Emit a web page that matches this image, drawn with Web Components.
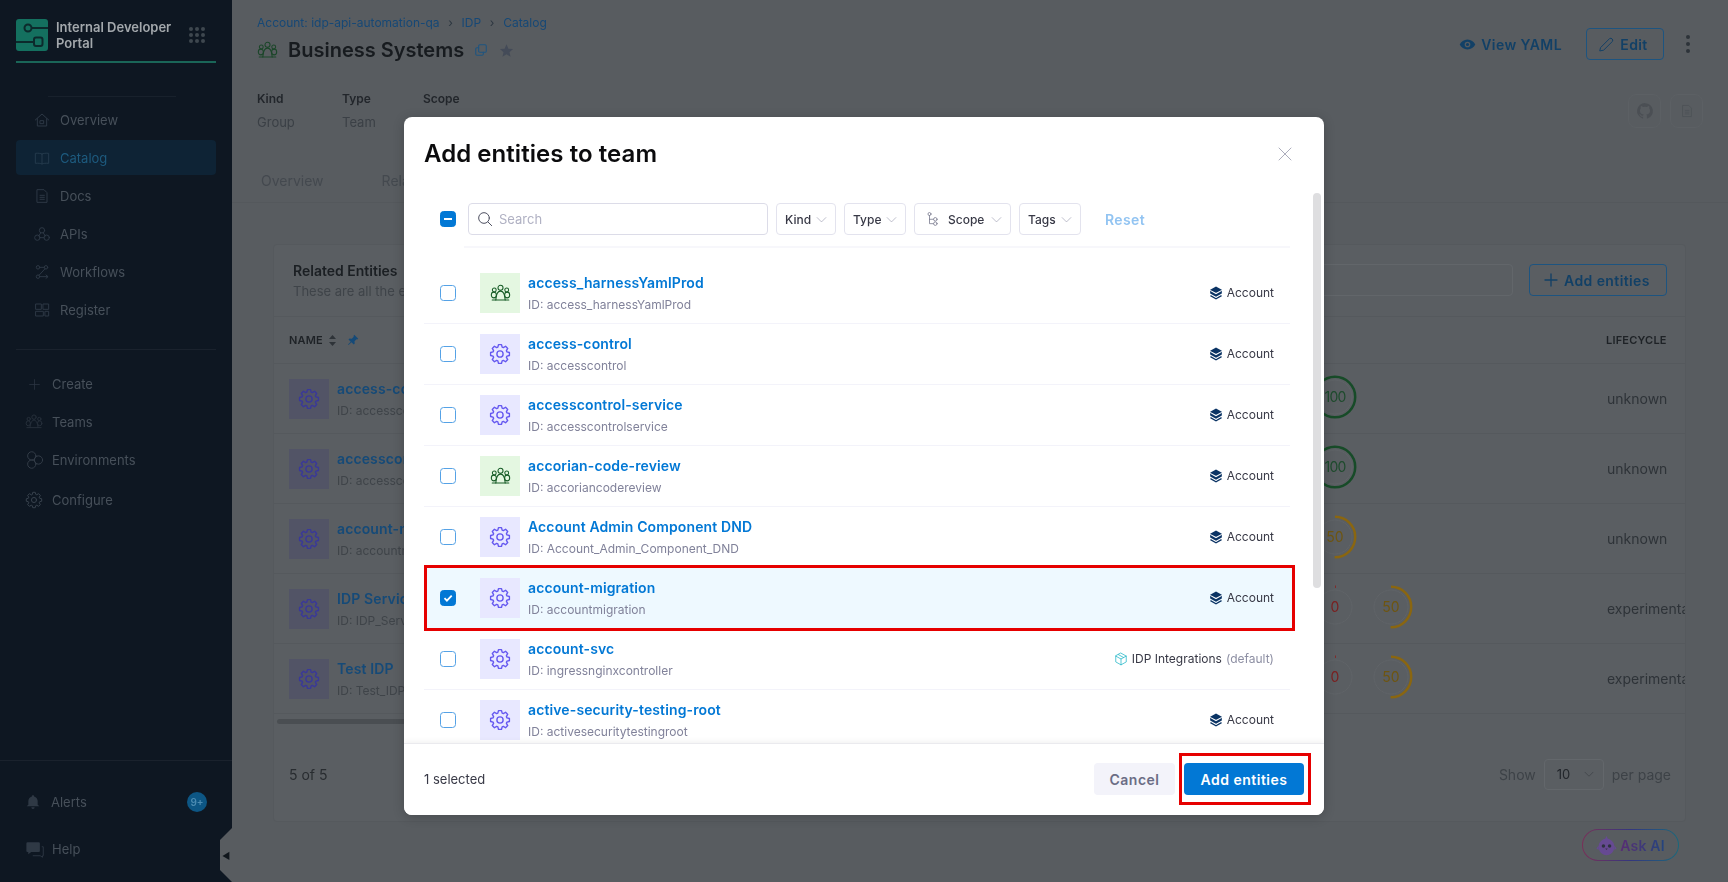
<!DOCTYPE html>
<html lang="en"><head><meta charset="utf-8"><title>Add entities to team</title>
<style>
html,body{margin:0;height:882px;overflow:hidden;background:#585c60;font-family:Inter,"Liberation Sans",sans-serif}
</style></head>
<body>
<idp-app></idp-app>
<script>
function gearPath(){
  const n=8,R=10.4,r=7.9,cx=12,cy=12;let d='';
  for(let i=0;i<n;i++){
    const a=(i/n)*Math.PI*2-Math.PI/2;
    const pts=[[r,-.3],[R,-.16],[R,.16],[r,.3]];
    pts.forEach(([q,o])=>{const x=cx+q*Math.cos(a+o),y=cy+q*Math.sin(a+o);d+=(d?'L':'M')+x.toFixed(2)+' '+y.toFixed(2)});
  }
  return d+'Z';
}
const ICONS={
 gear:`<path d="${gearPath()}"/><circle cx="12" cy="12" r="3.4"/>`,
 group:`<circle cx="12" cy="5.500" r="2.900"/><path d="M12 9.300c-3 0-5 4.700-5.400 10.200h10.800C17 14 15 9.300 12 9.300z"/><circle cx="4.900" cy="8" r="2.200"/><ellipse cx="4.400" cy="13.700" rx="2.900" ry="3.300"/><path d="M2.500 19.500h4.100"/><circle cx="19.100" cy="8" r="2.200"/><ellipse cx="19.600" cy="13.700" rx="2.900" ry="3.300"/><path d="M17.400 19.500h4.100"/>`,
 home:`<path d="M2 12 12 3l10 9"/><path d="M5 10v11h14V10"/><rect x="9.5" y="13" width="5" height="4.5"/>`,
 book:`<path d="M12 6C10 4.8 6 4.6 2 5v15c4-.4 8-.2 10 1 2-1.2 6-1.4 10-1V5c-4-.4-8-.2-10 1zM12 6v15"/>`,
 doc:`<path d="M5 2.5h10l4.5 4.5v14.5H5z"/><path d="M9 11h6.5M9 14h6.5M9 17h6.5"/>`,
 webhook:`<circle cx="12" cy="6.500" r="4"/><circle cx="5" cy="17.500" r="4"/><circle cx="19" cy="17.500" r="4"/><path d="M10 10.500 7 15M14 10.500 17 15M9 17.500h6"/>`,
 flows:`<circle cx="6" cy="5" r="2.6"/><circle cx="18" cy="5" r="2.6"/><circle cx="6" cy="19" r="2.6"/><path d="M8.6 5h6.8M16.5 7.2 7.6 16.8M8.6 19h12M18 16.5l3 2.5-3 2.5"/>`,
 grid:`<rect x="3" y="3" width="8" height="8"/><rect x="14" y="3" width="8" height="8"/><rect x="3" y="14" width="11" height="7"/><rect x="17" y="14" width="5" height="7"/>`,
 plus:`<path d="M12 3v18M3 12h18"/>`,
 hexes:`<circle cx="9" cy="6.500" r="5.500"/><circle cx="9" cy="17.500" r="5.500"/><circle cx="18" cy="12" r="5.500"/>`,
 search:`<circle cx="10.5" cy="10.5" r="8"/><path d="m16.500 16.500 5.500 5.500"/>`,
 chev:`<path d="m4 8.5 8 8 8-8"/>`,
 close:`<path d="M3 3l18 18M21 3 3 21"/>`,
 tree:`<circle cx="6" cy="3.500" r="2.600"/><path d="M6 6.100V20h6.500M6 12.500h6.500"/><circle cx="16" cy="12.500" r="3"/><circle cx="16" cy="20" r="3"/>`,
 pencil:`<path d="M4 16 16.5 3.5a3 3 0 0 1 4 4L8 20l-5 1z"/>`,
 copy:`<rect x="8" y="3" width="13" height="13" rx="2"/><path d="M8 8H5a2 2 0 0 0-2 2v9a2 2 0 0 0 2 2h9a2 2 0 0 0 2-2v-3"/>`,
 cube:`<path d="M12 2 21 7v10l-9 5-9-5V7z"/><path d="M3 7l9 5 9-5M12 12v10M7.5 4.5l9 5"/>`
};
const SOLID={
 account:`<path fill="currentColor" stroke="none" d="M12 1 22 6.5v6.4L12 18.5 2 12.900V6.500z"/><path fill="none" stroke="#fff" stroke-width="1.800" d="M2 7.500 12 13l10-5.500"/><path fill="none" stroke="currentColor" stroke-width="2" d="M2.500 16.500 12 22l9.500-5.500"/>`,
 eye:`<path fill="currentColor" d="M12 5C7 5 3 8 1 12c2 4 6 7 11 7s9-3 11-7c-2-4-6-7-11-7zm0 11a4 4 0 1 1 0-8 4 4 0 0 1 0 8z"/><circle cx="12" cy="12" r="2.200" fill="currentColor"/>`,
 star:`<path fill="currentColor" d="m12 2 3 7 7.500.7-5.700 4.900 1.700 7.400L12 18.100 5.500 22l1.700-7.400L1.500 9.700 9 9z"/>`,
 pin:`<path fill="currentColor" d="M14.500 1.500 22.500 9.500l-2 1.500-1.500-.5-4 4 .5 4.500-2 2-4.500-4.500L3 22l-1-1 5.500-5.500L3 11l2-2 4.500.5 4-4-.5-1.500z"/>`,
 bell:`<path fill="currentColor" d="M12 2a2 2 0 0 1 2 2c3 .8 5 3.500 5 6.500V16l2.500 2.500H2.500L5 16v-5.500C5 7.500 7 4.800 10 4a2 2 0 0 1 2-2zM9.500 20h5a2.500 2.500 0 0 1-5 0z"/>`,
 help:`<path fill="currentColor" d="M2 3h15a1.500 1.500 0 0 1 1.500 1.500v10A1.500 1.500 0 0 1 17 16H7l-4 3v-3H2a1.500 1.500 0 0 1-1.500-1.500v-10A1.500 1.500 0 0 1 2 3z"/><path fill="none" stroke="currentColor" stroke-width="1.200" d="M21 9h2v12h-1v2l-3-2H9"/>`,
 github:`<path fill="currentColor" d="M12 1.500A10.500 10.500 0 0 0 8.700 22c.5.100.7-.2.700-.5v-2c-3 .7-3.600-1.300-3.600-1.300-.5-1.200-1.200-1.500-1.200-1.500-1-.7.100-.7.100-.7 1.100.100 1.600 1.100 1.600 1.100 1 1.700 2.500 1.200 3.200.9.100-.7.400-1.200.7-1.500-2.400-.3-4.900-1.200-4.900-5.300 0-1.200.4-2.100 1.100-2.900-.1-.3-.5-1.300.1-2.800 0 0 .9-.3 2.900 1.100a10 10 0 0 1 5.200 0c2-1.400 2.900-1.100 2.900-1.100.6 1.500.2 2.500.1 2.800.7.800 1.100 1.700 1.100 2.900 0 4.100-2.500 5-4.900 5.300.4.300.7 1 .7 2v3c0 .3.2.6.700.5A10.500 10.500 0 0 0 12 1.500z"/>`,
 bird:`<path fill="#664a92" d="M12 1l1.500 3.200c4 .7 7.500 4.300 7.500 9.300 0 5.500-4 9.500-9 9.500s-9-4-9-9.500c0-5 3.500-8.600 7.500-9.300z"/><path fill="#664a92" d="M3 12 .5 15.500 3 17zM21 12l2.500 3.500L21 17z"/><circle cx="8.500" cy="12.500" r="2" fill="#2e3340"/><circle cx="15.500" cy="12.500" r="2" fill="#2e3340"/><path d="M10.500 15.500h3L12 17z" fill="#3a3048"/>`
};
function svg(name,size,sw,color){
  const solid=SOLID[name];
  return `<svg xmlns="http://www.w3.org/2000/svg" width="${size}" height="${size}" viewBox="0 0 24 24" style="display:block;flex:none;color:${color}" ${solid?'':`fill="none" stroke="${color}" stroke-width="${sw}" stroke-linejoin="round" stroke-linecap="round"`}>${solid||ICONS[name]}</svg>`;
}
class Base extends HTMLElement{
  connectedCallback(){ if(this.shadowRoot) return; const s=this.attachShadow({mode:'open'}); s.innerHTML=`<style>${this.css?this.css():''}</style>${this.html()}`; }
  a(n,d=''){return this.hasAttribute(n)?this.getAttribute(n):d}
}
const def=(n,c)=>customElements.define(n,c);

def('nav-item',class extends Base{
  css(){return `:host{display:flex;align-items:center;height:35px;margin:0 16px 3px;padding-left:18px;gap:10px;border-radius:4px;font-size:13px;color:#47505a}
  :host([active]){background:#0e2335;color:#1d5a7e}
  :host([tight]){padding-left:9px;height:34px;margin-bottom:4px;gap:9px}
  .w{width:18px;display:flex;justify-content:center;flex:none}
  :host(:not([tight])) .w{width:16px}`}
  html(){const act=this.hasAttribute('active');const size=+this.a('size',this.hasAttribute('tight')?18:16);return `<span class="w">${svg(this.a('icon'),size,this.hasAttribute('tight')?1.3:1.5,this.a('ic',act?'#243a4c':'#2d3845'))}</span><slot></slot>`}
});

def('idp-sidebar',class extends Base{
  css(){return `:host{display:flex;flex-direction:column;position:relative;width:232px;flex:none;height:882px;background:#0e1722;box-sizing:border-box;padding-bottom:23px}
  .brand{display:flex;align-items:center;margin:19px 16px 0;height:32px;gap:8px;color:#a3a8ac;font-size:13px;font-weight:600;line-height:16px}
  .brand span{width:123px}
  .logo{flex:none}
  .line{height:2px;background:#1a6658;margin:10px 16px 0}
  .faint{height:1px;background:#18212c;margin:33px 56px 0 48px}
  .nav{margin-top:5px}
  .nav2{margin-top:17px}
  hr{border:0;height:1px;background:#1a222d;margin:0 16px}
  hr.full{margin:0}
  .grow{flex:1}
  .alerts,.help{display:flex;align-items:center;font-size:13px;color:#47505a}
  .alerts{margin:31px 25px 0 25px;height:20px;gap:10px}
  .help{margin:27px 25px 0 26px;height:20px;gap:8px}
  .badge{margin-left:auto;width:20px;height:20px;border-radius:50%;background:#0d5684;color:#4d8cb2;font-size:10px;font-weight:600;display:flex;align-items:center;justify-content:center}
  .handle{position:absolute;right:0;top:828px;width:12px;height:54px;background:#585c60;clip-path:polygon(100% 0,100% 100%,0 78%,0 22%);display:flex;align-items:center;justify-content:center;font-size:9px;color:#10161c}
  .dots{flex:none;margin-left:2px}`}
  html(){return `<div class="brand">
    <svg class="logo" width="32" height="32" viewBox="0 0 32 32"><rect width="32" height="32" rx="3" fill="#14705f"/><g fill="none" stroke="#0c2a2c" stroke-width="2"><path d="M16 9h16M0 23h18"/><circle cx="12" cy="9" r="3.500"/><rect x="18" y="18.500" width="8.500" height="8.500" rx="2"/></g></svg>
    <span>Internal Developer Portal</span>
    <svg class="dots" width="16" height="16" viewBox="0 0 16 16" fill="#3e474f">${[2,8,14].flatMap(y=>[2,8,14].map(x=>`<circle cx="${x}" cy="${y}" r="2"/>`)).join('')}</svg>
  </div>
  <div class="line"></div><div class="faint"></div>
  <div class="nav"><slot name="primary"></slot></div>
  <hr style="margin-top:19px">
  <div class="nav2"><slot name="secondary"></slot></div>
  <div class="grow"></div>
  <hr class="full">
  <div class="alerts">${svg('bell',16,1.5,'#2f3945')}Alerts<span class="badge">9+</span></div>
  <div class="help">${svg('help',18,1.5,'#2f3945')}Help</div>
  <div class="handle">◀</div>`}
});

def('page-header',class extends Base{
  css(){return `:host{display:block;height:203px;box-sizing:border-box;border-bottom:1px solid #54585c;padding-left:25px;color:#15191d}
  .top{display:flex;justify-content:space-between;height:84px}
  .crumb{display:flex;align-items:center;height:16px;margin-top:14px;font-size:12px;color:#164876}
  .crumb i{font-style:normal;width:22px;display:flex;justify-content:center;color:#2c3640;font-size:12px}
  .title{display:flex;align-items:center;height:28px;margin-top:6px;font-size:20px;font-weight:600}
  .title b{font-weight:600;margin-left:11px;color:#171b1f}
  .right{display:flex;align-items:center;height:32px;margin-top:28px;padding-right:37px;font-size:14px;font-weight:600;color:#124066;letter-spacing:.4px}
  .yaml{display:flex;align-items:center;gap:5px}
  .edit{display:flex;align-items:center;justify-content:center;gap:5px;width:78px;height:32px;box-sizing:border-box;border:1px solid #1d5480;border-radius:4px;margin:0 22px 0 24px;padding-right:4px}
  .kebab{width:5px;display:flex;flex-direction:column;gap:3px}
  .kebab u{display:block;width:4px;height:4px;border-radius:50%;background:#2d3339}
  .meta{display:flex;justify-content:space-between;margin-top:7px;height:44px}
  .cols{display:flex}
  .col{font-size:13px;color:#3b4046;line-height:16px}
  .col div:first-child{font-size:12px;font-weight:600;color:#22262b;margin-bottom:7px}
  .actions{display:flex;gap:9px;margin-top:3px;padding-right:25px}
  .ib{width:33px;height:34px;border:1px solid #5c6064;border-radius:8px;box-sizing:border-box;display:flex;align-items:center;justify-content:center}
  .tabs{display:flex;gap:58px;margin-top:34px;padding-left:4px;font-size:14px;color:#44494f;height:24px;line-height:24px}`}
  html(){return `<div class="top"><div>
      <div class="crumb">Account: idp-api-automation-qa<i>›</i>IDP<i>›</i>Catalog</div>
      <div class="title">${svg('group',21,1.2,'#1b4629')}<b style="margin-left:10px">Business Systems</b><span style="width:10px"></span>${svg('copy',14,1.8,'#1d5480')}<span style="width:11px"></span>${svg('star',15,1.5,'#444b58')}</div>
    </div>
    <div class="right"><span class="yaml">${svg('eye',17,1.5,'#124066')}View YAML</span><span class="edit">${svg('pencil',17,1.4,'#124066')}Edit</span><span class="kebab"><u></u><u></u><u></u></span></div>
  </div>
  <div class="meta"><div class="cols">
      <div class="col" style="width:85px"><div>Kind</div><div>Group</div></div>
      <div class="col" style="width:81px"><div>Type</div><div>Team</div></div>
      <div class="col"><div>Scope</div><div style="color:#28567f">Custom</div></div>
    </div>
    <div class="actions"><span class="ib">${svg('github',18,1.5,'#4b4f54')}</span><span class="ib">${svg('doc',14,1.5,'#4e5257')}</span></div>
  </div>
  <div class="tabs"><span>Overview</span><span>Relationships</span></div>`}
});

def('score-ring',class extends Base{
  css(){return `:host{display:block;position:relative;width:46px;height:46px;font-size:14px;margin-top:-4px}
  span{position:absolute;inset:0;display:flex;align-items:center;justify-content:center}
  svg{position:absolute;inset:0}`}
  html(){
    const v=+this.a('value');
    const col=v==100?'#174b28':v==50?'#8a6610':'#842828';
    const txt=v==100?'#1e4b2d':v==50?'#6e5510':'#7a2020';
    const R=20.2,c=2*Math.PI*R,len=v==0?1:c*v/100;
    return `<svg width="46" height="46" viewBox="0 0 46 46"><circle cx="23" cy="23" r="17" fill="#5a5e62" stroke="#606468" stroke-width="1"/><circle cx="23" cy="23" r="${R}" fill="none" stroke="${col}" stroke-width="2.500" stroke-dasharray="${len} ${c}" transform="rotate(-90 23 23)"/></svg><span style="color:${txt};${v==100?'letter-spacing:-.8px':''}">${v}</span>`}
});

def('table-row',class extends Base{
  css(){return `:host{display:grid;grid-template-columns:1023px 46px 10px 46px 192px 160px;align-items:center;height:70px;padding-left:15px;box-sizing:border-box;border-bottom:1px solid #55595d;white-space:nowrap}
  .name{display:flex;gap:8px;align-items:center}
  .box{width:40px;height:40px;background:#525466;display:flex;align-items:center;justify-content:center;flex:none}
  .t{font-size:14px;font-weight:600;color:#154a78;line-height:20px;letter-spacing:.12px}
  .id{font-size:12px;color:#3f4449;line-height:16px;margin-top:4px}
  .life{font-size:14px;color:#2e3338;grid-column:5 / 7;padding-left:193px}`}
  html(){const s=this.a('scores','').split(',').filter(Boolean);
    return `<div class="name"><div class="box">${svg('gear',22,1.5,'#39389a')}</div><div><div class="t">${this.a('title')}</div><div class="id">ID: ${this.a('eid')}</div></div></div>
    ${s[0]?`<score-ring value="${s[0]}"></score-ring>`:'<i></i>'}<i></i>${s[1]?`<score-ring value="${s[1]}"></score-ring>`:'<i></i>'}
    <div class="life">${this.a('life')}</div>`}
});

def('entities-card',class extends Base{
  css(){return `:host{display:block;position:relative;margin:41px 42px 0 41px;height:578px;box-sizing:border-box;border:1px solid #55595d;border-radius:4px;background:#5a5e62;overflow:hidden;color:#22262b}
  .head{display:flex;height:72px;box-sizing:border-box;border-bottom:1px solid #55595d;padding:19px 18px 0 19px;justify-content:space-between}
  .h1{font-size:14px;font-weight:600;color:#1b1f23;line-height:16px;margin-top:-1px}
  .h2{font-size:13px;color:#3f4449;line-height:16px;margin-top:4px;white-space:nowrap}
  .tools{display:flex;gap:16px}
  .search{width:313px;height:32px;box-sizing:border-box;border:1px solid #62666a;border-radius:4px}
  .add{width:138px;height:32px;box-sizing:border-box;border:1px solid #1d5480;border-radius:4px;display:flex;align-items:center;justify-content:center;gap:5px;font-size:14px;font-weight:600;letter-spacing:.4px;color:#124066;padding-right:3px}
  .th{display:flex;align-items:center;height:47px;box-sizing:border-box;border-bottom:1px solid #55595d;padding-left:15px;font-size:11px;font-weight:600;color:#1e2226;letter-spacing:.2px}
  .sort{margin-left:6px}
  .pin{margin-left:11px}
  .life{margin-left:auto;width:79px}
  .bar{height:5px;border-radius:3px;margin:5px 0 0 3px;width:900px;background:#4a4e52}
  .foot{display:flex;align-items:center;padding:0 15px;height:64px;margin-top:18px;font-size:14px;color:#282c30}
  .foot .r{margin-left:auto;display:flex;align-items:center;gap:8px;color:#3d4247;margin-right:-1px}
  .sel{width:60px;height:31px;box-sizing:border-box;border:1px solid #63676b;border-radius:4px;display:flex;align-items:center;padding:0 8px 0 12px;justify-content:space-between;color:#22262b;font-size:13px}`}
  html(){return `<div class="head"><div><div class="h1">Related Entities</div><div class="h2">These are all the entities</div></div>
    <div class="tools"><div class="search"></div><div class="add">${svg('plus',16,2,'#124066')}Add entities</div></div></div>
    <div class="th">NAME<svg class="sort" width="7" height="11" viewBox="0 0 7 11" fill="#2e3338"><path d="M3.500 0 7 4H0zM3.500 11 0 7h7z"/></svg><span class="pin">${svg('pin',12,1.5,'#154a78')}</span><span class="life">LIFECYCLE</span></div>
    <slot></slot>
    <div class="bar"></div>
    <div class="foot">5 of 5<div class="r">Show<span class="sel">10${svg('chev',12,1.5,'#3d4247')}</span>per page</div></div>`}
});

def('ask-ai',class extends Base{
  css(){return `:host{position:absolute;left:1582px;top:829px;width:97px;height:32px;box-sizing:border-box;border-radius:16px;border:1.500px solid transparent;background:linear-gradient(#585c60,#585c60) padding-box,linear-gradient(90deg,#7a2f58,#34367e,#1a687c) border-box;display:flex;align-items:center;justify-content:center;gap:3px;font-size:14px;font-weight:600;letter-spacing:.2px}
  span{background:linear-gradient(90deg,#592c74,#23457e);-webkit-background-clip:text;background-clip:text;color:transparent}`}
  html(){return svg('bird',21,1,'#664a92')+'<span><slot></slot></span>'}
});

def('ui-checkbox',class extends Base{
  css(){return `:host{display:block;width:16px;height:16px;box-sizing:border-box;border:1px solid #55a2e6;border-radius:3.500px;background:#fff;flex:none}
  :host([state]){background:#0278d5;border-color:#0278d5;display:flex;align-items:center;justify-content:center}`}
  html(){const s=this.a('state');
    if(s=='mixed')return '<svg width="10" height="10" viewBox="0 0 10 10"><path d="M1 5h8" stroke="#fff" stroke-width="2"/></svg>';
    if(s=='on')return '<svg width="10" height="10" viewBox="0 0 10 10"><path d="m1.500 5.200 2.400 2.400 4.800-5" fill="none" stroke="#fff" stroke-width="1.800"/></svg>';
    return ''}
});

def('filter-chip',class extends Base{
  css(){return `:host{display:flex;align-items:center;height:32px;box-sizing:border-box;border:1px solid #e3e3ee;border-radius:4px;padding:0 7px 0 8px;font-size:12px;font-weight:500;color:#383946;flex:none}
  :host([icon]){padding-left:11px}`}
  html(){const ic=this.a('icon');return `${ic?svg(ic,14,1.3,'#717388')+'<span style="width:8px"></span>':''}<slot></slot><span style="flex:1"></span>${svg('chev',13,1.2,'#9a9cb0')}`}
});

def('entity-row',class extends Base{
  css(){return `:host{display:flex;align-items:center;position:relative;isolation:isolate;height:61px;box-sizing:border-box;padding:0 16px;border-bottom:1px solid #f3f3fa;flex:none}
  .hl{position:absolute;z-index:-1;left:0;right:-5px;top:-3px;bottom:-3px;background:#eef9ff;border:3px solid #e60000;box-sizing:border-box}
  .box{width:40px;height:40px;margin-left:24px;display:flex;align-items:center;justify-content:center;flex:none;background:#e8e8ff}
  .box.g{background:#e4f7e1}
  .txt{margin-left:8px;flex:1}
  .t{font-size:14px;font-weight:600;color:#0278d5;line-height:20px;letter-spacing:.12px}
  .id{font-size:12px;color:#81829a;line-height:16px;margin-top:4px}
  .scope{display:flex;align-items:center;gap:4px;font-size:12px;color:#383946;margin-top:-1px}
  .scope em{font-style:normal;color:#8d8fa3}`}
  html(){const g=this.a('kind')=='group',sel=this.hasAttribute('selected'),sc=this.a('scope');
    return `${sel?'<div class="hl"></div>':''}<ui-checkbox ${sel?'state="on"':''}></ui-checkbox>
    <div class="box ${g?'g':''}">${g?svg('group',21,1.2,'#175c27'):svg('gear',22,1.5,'#6558f0')}</div>
    <div class="txt"><div class="t">${this.a('title')}</div><div class="id">ID: ${this.a('eid')}</div></div>
    <div class="scope">${sc?svg('cube',14,1.4,'#31bccb')+`<span>${sc}</span><em>(default)</em>`:svg('account',14,1.5,'#0a3364')+'<span>Account</span>'}</div>`}
});

def('add-entities-modal',class extends Base{
  css(){return `:host{position:fixed;left:404px;top:117px;width:920px;height:698px;background:#fff;border-radius:8px;display:flex;flex-direction:column;overflow:hidden;color:#383946;box-shadow:0 2px 12px rgba(0,0,0,.2)}
  .head{display:flex;height:76px;flex:none;padding:0 31px 0 20px;align-items:flex-start;justify-content:space-between}
  h2{margin:22px 0 0;font-size:24px;font-weight:600;line-height:30px;color:#0b0b0d;letter-spacing:.06px}
  .x{margin-top:29px}
  .body{flex:1;min-height:0;overflow:hidden;padding:10px 34px 0 20px;position:relative}
  .tool{display:flex;align-items:center;height:32px;padding-left:16px}
  .s{width:300px;height:32px;margin-left:12px;box-sizing:border-box;border:1px solid #dcdce8;border-radius:4px;display:flex;align-items:center;padding-left:8px;gap:6px;font-size:13px;color:#b0b1c3;flex:none}
  .reset{font-size:14px;font-weight:600;color:#92c4f2;margin-left:24px;letter-spacing:.4px}
  .rule{height:2px;background:#f7f7fb;margin:11px 0 15px 40px}
  .bar{position:absolute;right:3px;top:0;width:8px;height:395px;border-radius:4px;background:#dedee0}
  .foot{height:72px;flex:none;display:flex;align-items:center;padding:0 20px 1px;border-top:1px solid #eaeaee;box-shadow:0 -2px 5px rgba(0,0,0,.05);box-sizing:border-box;font-size:13px;position:relative;background:#fff}
  .btns{margin-left:auto;display:flex;gap:9px}
  .btn{height:32px;border-radius:4px;display:flex;align-items:center;justify-content:center;font-size:14px;font-weight:600;letter-spacing:.5px;position:relative}
  .c{width:81px;background:#f3f3fa;color:#6b6d85}
  .a{width:120px;background:#0278d5;color:#fff}
  .mark{position:absolute;left:-5px;right:-7px;top:-10px;bottom:-10px;border:3px solid #e60000;box-sizing:border-box}`}
  html(){return `<div class="head"><h2>Add entities to team</h2><div class="x">${svg('close',16,1.1,'#8d8fa3')}</div></div>
  <div class="body">
    <div class="tool"><ui-checkbox state="mixed"></ui-checkbox>
      <div class="s">${svg('search',16,1.5,'#4f5162')}Search</div>
      <filter-chip style="width:60px;margin-left:8px">Kind</filter-chip>
      <filter-chip style="width:62px;margin-left:8px">Type</filter-chip>
      <filter-chip icon="tree" style="width:97px;margin-left:8px">Scope</filter-chip>
      <filter-chip style="width:62px;margin-left:8px">Tags</filter-chip>
      <span class="reset">Reset</span></div>
    <div class="rule"></div>
    <slot></slot>
    <div class="bar"></div>
  </div>
  <div class="foot">1 selected<div class="btns"><div class="btn c">Cancel</div><div class="btn a">Add entities<div class="mark"></div></div></div></div>`}
});

def('idp-app',class extends Base{
  css(){return `:host{display:block;position:relative;width:1728px;height:882px;overflow:hidden}
  .bg{display:flex;width:1728px;height:882px;filter:blur(.4px)}
  main{flex:1;min-width:0;background:#585c60;position:relative}`}
  html(){const item=(slot,icon,t,extra='')=>`<nav-item slot="${slot}" icon="${icon}" ${extra}>${t}</nav-item>`;
  return `<div class="bg"><idp-sidebar>
    ${item('primary','home','Overview')}${item('primary','book','Catalog','active')}${item('primary','doc','Docs')}${item('primary','webhook','APIs')}${item('primary','flows','Workflows')}${item('primary','grid','Register')}
    ${item('secondary','plus','Create','tight size="13"')}${item('secondary','group','Teams','tight ic="#262f3b"')}${item('secondary','hexes','Environments','tight ic="#333d48"')}${item('secondary','gear','Configure','tight ic="#39434e" style="margin-top:6px"')}
  </idp-sidebar>
  <main><page-header></page-header>
    <entities-card>
      <table-row title="access-control" eid="accesscontrol" scores="100" life="unknown"></table-row>
      <table-row title="accesscontrol-service" eid="accesscontrolservice" scores="100" life="unknown"></table-row>
      <table-row title="account-migration" eid="accountmigration" scores="50" life="unknown"></table-row>
      <table-row title="IDP Service" eid="IDP_Service" scores="0,50" life="experimental"></table-row>
      <table-row title="Test IDP" eid="Test_IDP" scores="0,50" life="experimental"></table-row>
    </entities-card>
    </main></div>
  <ask-ai>Ask AI</ask-ai>
  <add-entities-modal>
    <entity-row kind="group" title="access_harnessYamlProd" eid="access_harnessYamlProd"></entity-row>
    <entity-row title="access-control" eid="accesscontrol"></entity-row>
    <entity-row title="accesscontrol-service" eid="accesscontrolservice"></entity-row>
    <entity-row kind="group" title="accorian-code-review" eid="accoriancodereview"></entity-row>
    <entity-row title="Account Admin Component DND" eid="Account_Admin_Component_DND"></entity-row>
    <entity-row selected title="account-migration" eid="accountmigration"></entity-row>
    <entity-row title="account-svc" eid="ingressnginxcontroller" scope="IDP Integrations"></entity-row>
    <entity-row title="active-security-testing-root" eid="activesecuritytestingroot"></entity-row>
  </add-entities-modal>`}
});
</script>
</body></html>
